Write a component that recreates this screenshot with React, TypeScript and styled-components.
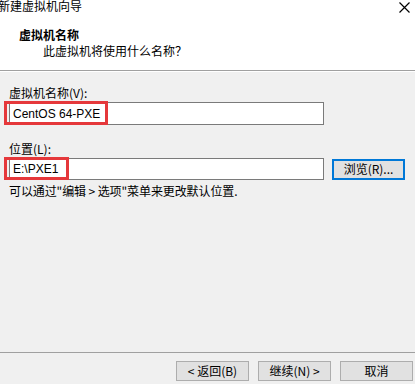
import React from "react";
import styled, { createGlobalStyle } from "styled-components";

const GlobalStyle = createGlobalStyle`
    html, body {
        margin: 0;
        padding: 0;
        background: #f0f0f0;
    }
    body {
        font-family: "Liberation Sans", "Noto Sans CJK SC", sans-serif;
        font-size: 12px;
        color: #000;
    }
`;

const Window = styled.div`
    position: relative;
    width: 415px;
    height: 384px;
    display: flex;
    flex-direction: column;
    overflow: hidden;
    background: #f0f0f0;
`;

const Header = styled.div`
    height: 70px;
    background: #fff;
    border-bottom: 1px solid #a0a0a0;
    box-shadow: 0 1px 0 #fff;
    display: flex;
    flex-direction: column;
`;

const TitleBar = styled.div`
    display: flex;
    justify-content: space-between;
    align-items: flex-start;
    height: 15px;
`;

const TitleText = styled.span`
    margin-left: -2px;
    font-family: "Noto Sans CJK SC", sans-serif;
    font-size: 12px;
    line-height: 14px;
    margin-top: -1px;
    color: #000;
`;

/* close button sits over the title bar's right corner */
const CloseIcon = styled.svg`
    position: absolute;
    top: 2px;
    right: 5px;
    width: 11px;
    height: 11px;
    z-index: 5;
`;

const Heading = styled.div`
    margin-top: 12px;
    padding-left: 19px;
    font-family: "Noto Sans CJK SC", sans-serif;
    font-weight: bold;
    font-size: 12px;
    line-height: 16px;
`;

const SubHeading = styled.div`
    padding-left: 43px;
    font-family: "Noto Sans CJK SC", sans-serif;
    font-size: 12px;
    line-height: 16px;
`;

const Body = styled.div`
    flex: 1;
    padding: 14px 0 0 9px;
    display: flex;
    flex-direction: column;
`;

const Label = styled.div<{ $top?: number }>`
    margin-top: ${(p) => p.$top ?? 0}px;
    font-family: "Noto Sans CJK SC", sans-serif;
    font-size: 12px;
    line-height: 16px;
    height: 16px;
`;

const Row = styled.div`
    display: flex;
    align-items: center;
    gap: 8px;
    margin-top: 1px;
`;

const InputBox = styled.div<{ $h: number }>`
    position: relative;
    box-sizing: border-box;
    width: 315px;
    height: ${(p) => p.$h}px;
    border: 1px solid #7a7a7a;
    background: #fff;
    display: flex;
    align-items: center;
    padding-left: 3px;
    font-family: "Liberation Sans", sans-serif;
    font-size: 12px;
`;

const Highlight = styled.div<{ $w: number }>`
    position: absolute;
    left: -6px;
    top: -2px;
    width: ${(p) => p.$w}px;
    height: calc(100% + 3px);
    box-sizing: border-box;
    border: 3px solid #e5383b;
    pointer-events: none;
`;

const Button = styled.button<{ $focused?: boolean }>`
    box-sizing: border-box;
    width: 73px;
    height: ${(p) => (p.$focused ? 21 : 20)}px;
    margin: 0;
    padding: 0;
    background: #e1e1e1;
    border: ${(p) => (p.$focused ? "2px solid #0078d7" : "1px solid #adadad")};
    font-family: "Noto Sans CJK SC", sans-serif;
    font-size: 12px;
    line-height: 16px;
    color: #000;
    display: flex;
    align-items: center;
    justify-content: center;
`;

const Hint = styled.div`
    margin-top: 3px;
    font-family: "Noto Sans CJK SC", sans-serif;
    font-size: 12px;
    line-height: 16px;
    letter-spacing: -0.1px;
`;

const Footer = styled.div`
    height: 32px;
    border-top: 1px solid #a0a0a0;
    display: flex;
    justify-content: flex-end;
    align-items: flex-start;
    gap: 9px;
    padding: 8px 2px 0 0;
    box-sizing: border-box;
`;

export default function App() {
    return (
        <Window>
            <GlobalStyle />
            <Header>
                <TitleBar>
                    <TitleText>新建虚拟机向导</TitleText>
                </TitleBar>
                <Heading>虚拟机名称</Heading>
                <SubHeading>此虚拟机将使用什么名称？</SubHeading>
            </Header>
            <CloseIcon viewBox="0 0 11 11">
                <path d="M0.5 0.5 L10.5 10.5 M10.5 0.5 L0.5 10.5" stroke="#000" strokeWidth="1.2" fill="none" />
            </CloseIcon>
            <Body>
                <Label>虚拟机名称(V):</Label>
                <Row>
                    <InputBox $h={23}>
                        CentOS 64-PXE
                        <Highlight $w={104} />
                    </InputBox>
                </Row>
                <Label $top={16}>位置(L):</Label>
                <Row>
                    <InputBox $h={22}>
                        E:\PXE1
                        <Highlight $w={65} />
                    </InputBox>
                    <Button $focused>浏览(R)...</Button>
                </Row>
                <Hint>可以通过"编辑 &gt; 选项"菜单来更改默认位置.</Hint>
            </Body>
            <Footer>
                <Button>&lt; 返回(B)</Button>
                <Button>继续(N) &gt;</Button>
                <Button>取消</Button>
            </Footer>
        </Window>
    );
}
